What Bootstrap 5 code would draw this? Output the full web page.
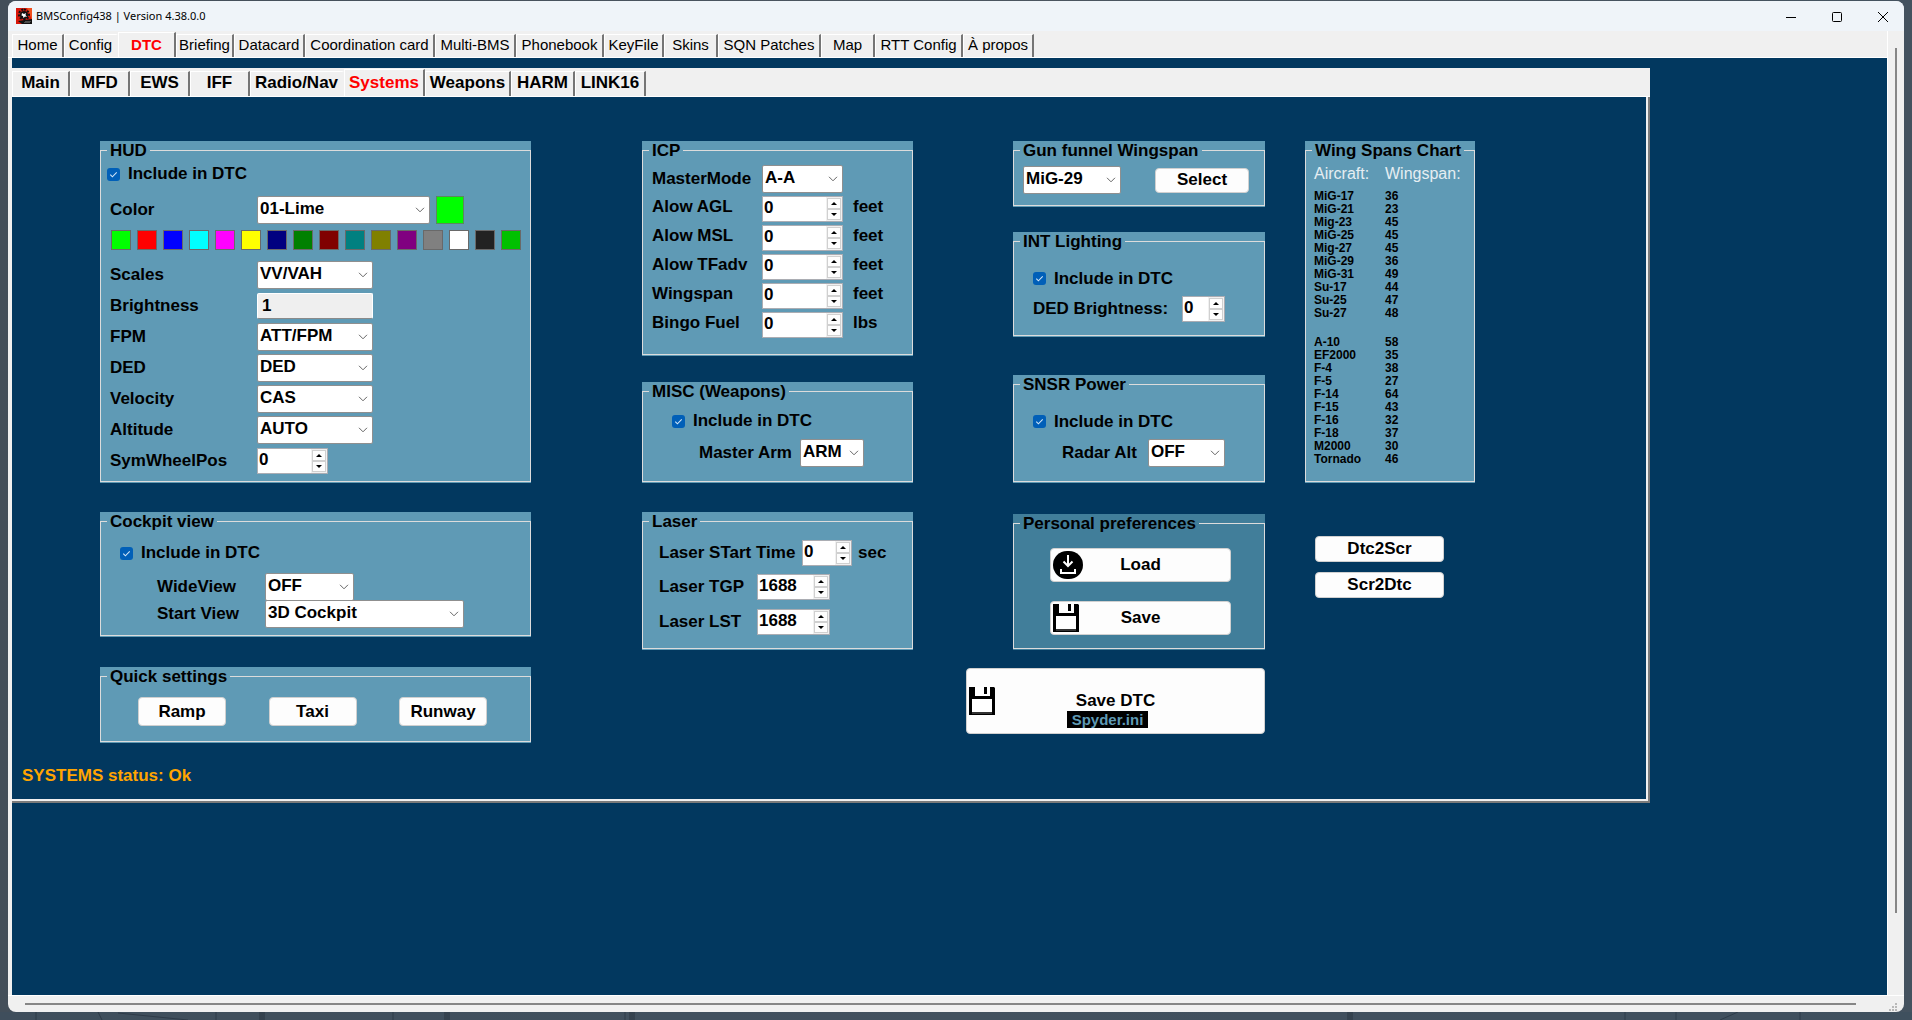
<!DOCTYPE html>
<html lang="en">
<head>
<meta charset="utf-8">
<meta name="viewport" content="width=device-width, initial-scale=1">
<title>BMSConfig438 | Version 4.38.0.0</title>
<link href="https://cdn.jsdelivr.net/npm/bootstrap@5.3.0/dist/css/bootstrap.min.css" rel="stylesheet">
<style>
:root{--navy:#02385f;--steel:#5f9ab5;--steel-dark:#417e9a;--face:#f0f0f0}
body{font-family:"Liberation Sans",Arial,sans-serif;font-size:17px;line-height:20px;font-weight:700;color:#000;background:linear-gradient(90deg,#434e59,#4b5560 50%,#44525f)}
.desk{min-height:100vh;padding:1px 8px 8px}
.desk-art{left:0;bottom:0;width:100%;height:8px;opacity:.6}
.win{background:var(--face);border-radius:8px;overflow:hidden}
.titlebar{height:30px;background:#eff4f9;font:400 11px/16px "Noto Sans","Open Sans",sans-serif;padding:0 8px}
.caption-btn{border:0;background:none;width:46px;height:30px;padding:0}
.caption-btn:last-child{width:26px;margin-left:10px}
.rail-v{width:17px;border-left:1px solid #fff;padding:17px 7px 82px 7px}
.rail-h{height:17px;border-top:1px solid #fff;padding:7px 3px 7px 17px}
.thumb{background:#868686}
/* classic tab strips */
.strip{background:var(--face);border-bottom:1px solid #fff;padding-top:3px}
.strip a{display:block;flex:none;text-align:center;text-decoration:none;color:#000;white-space:nowrap;border:1px solid #fff;border-width:1px 2px 0 1px;border-right-color:#757575}
.strip a.active{color:#f00;font-weight:700;margin-top:-2px;padding-top:2px}
.strip a.before-active{border-right-color:var(--face)}
.strip-main{height:27px;font-size:15px;line-height:20px;font-weight:400}
.strip-sub{height:29px}
.strip-sub a{line-height:22px}
.t52{width:52px}.t54{width:54px}.t58{width:58px}.t60{width:60px}.t64{width:64px}.t71{width:71px}.t81{width:81px}.t88{width:88px}.t86{width:86px}.t94{width:94px}.t103{width:103px}.t130{width:130px}
.page{background:var(--navy);margin-left:4px;padding-top:10px}
.subtabs{width:87.36%}
.sheet{background:var(--navy);border:solid #7b7b7b;border-width:0 2px 2px 0}
.sheet-in{border:solid var(--face);border-width:0 2px 2px 0;padding:44px 171px 13px 88px}
.c1{flex:431 1 0}.c2{flex:271 1 0;margin-left:111px}.c3{flex:252 1 0;margin-left:100px}.c4{flex:170 1 0;margin-left:40px}
/* group boxes */
.panel{background:var(--steel);padding-bottom:1px}
.panel.deep{background:var(--steel-dark)}
.panel fieldset{border:1px solid #dcdcdc;height:100%}
.panel legend{float:none;width:auto;font-size:17px;line-height:19px;margin:0 0 0 6px;padding:0 3px}
.h342{height:342px}.h125{height:125px}.h76{height:76px}.h215{height:215px}.h101{height:101px}.h138{height:138px}.h66{height:66px}.h105{height:105px}.h108{height:108px}.h136{height:136px}
.mt29{margin-top:29px}.mt30{margin-top:30px}.mt26{margin-top:26px}.mt25{margin-top:25px}.mt38{margin-top:38px}.mt31{margin-top:31px}.mt6{margin-top:6px}.mt14{margin-top:14px}
.line{display:flex;align-items:center}
.line label,.unit{white-space:nowrap}
.r28{height:28px}.r27{height:27px}.r29{height:29px}.r31{height:31px}.r34{height:34px}.r35{height:35px}
.icp .r29 label,.icp .unit{padding-bottom:4px}
.form-check-input.tick{width:13px;height:13px;margin:0 8px 0 0;border:0;border-radius:3px;background-size:11px;flex:none}
.form-check-input.tick:checked{background-color:#005fb8;background-image:url("data:image/svg+xml,%3Csvg xmlns='http://www.w3.org/2000/svg' viewBox='0 0 12 12'%3E%3Cpath d='M2.5 6.2l2.3 2.3 4.7-4.8' fill='none' stroke='%23cfe4f7' stroke-width='1.2'/%3E%3C/svg%3E")}
.form-select.drop{height:28px;border:1px solid #8f8f8f;border-radius:2px;padding:0 18px 2px 2px;color:#000;font-weight:700;font-size:17px;line-height:20px;background:#fff url("data:image/svg+xml,%3Csvg xmlns='http://www.w3.org/2000/svg' viewBox='0 0 10 6'%3E%3Cpath d='M1 .8l4 4 4-4' fill='none' stroke='%23666'/%3E%3C/svg%3E") no-repeat right 4px center/10px 6px;flex:none}
.w173{width:173px}.w116{width:116px}.w89{width:89px}.w199{width:199px}.w81{width:81px}.w64{width:64px}.w98{width:98px}.w77{width:77px}
.form-control.flat{width:116px;height:26px;border:1px solid #fff;border-bottom-color:#8a8a8a;border-radius:2px;background:#efefef;padding:0 4px;font-weight:700;font-size:17px;color:#000}
.spin{display:flex;height:26px;border:1px solid #abadb3;background:#fff;flex:none}
.spin input{min-width:0;flex:1;border:0;padding:0 0 2px 1px;font-weight:700;font-size:17px;line-height:20px;background:none;color:#000}
.spin .arrows{display:flex;flex-direction:column;width:16px;padding:1px;background:var(--face)}
.spin button{flex:1;padding:0;border:1px solid #d0d0d0;background:#fdfdfd;display:flex;align-items:center;justify-content:center}
.spin button::before{content:"";border:3px solid transparent;border-bottom-color:#000;border-top:0}
.spin button:last-child::before{border-top:3px solid #000;border-bottom:0}
.s71{width:71px}.s81{width:81px}.s50{width:50px}.s73{width:73px}.s43{width:43px}
.swatches{gap:6px;padding:6px 0 9px 10px}
.sw{width:20px;height:20px;padding:0;border:1px solid #696969}
.sw-now{width:28px;height:28px;margin-left:6px;border:1px solid #5b8a5b;background:#0f0}
.btn.key{background:#fdfdfd;border:1px solid #d0d0d0;border-radius:4px;color:#000;font-weight:700;font-size:17px;line-height:20px;padding:0;position:relative}
.key .pic{position:absolute;left:2px;top:50%;transform:translateY(-50%)}
.w-hud{width:147px}.w-cpt{width:108px}.w-icp{width:110px}.w-las{width:98px}.w-arm{width:101px}.w-time{width:143px}.w-ded{width:149px}.w-radar{width:86px}
.i7{padding-left:6px}.i10{padding-left:9px}.i17{padding-left:16px}.i20{padding-left:19px}.i30{padding-left:29px}.i49{padding-left:48px}.i57{padding-left:56px}
.quick{padding:11px 43px 0 37px}.quick .key{width:88px;height:29px}
.unit{margin-left:10px}.unit-s{margin-left:6px}
.gun{padding-right:15px}.gun .key{width:94px;height:25px}
.prefs{gap:19px;padding:15px 33px 0 36px}.prefs .key{height:34px}
.convert{gap:10px;margin:53px 31px 0 10px}.convert .key{height:26px}
.spans{font-size:12px;line-height:13px;margin-left:8px}
.spans th{font-size:16px;line-height:20px;font-weight:400;color:#e6eef2;padding:4px 0 6px}
.spans td{padding:0}
.spans td:first-child,.spans th:first-child{width:71px}
.spans .gap td{padding-top:16px}
.btn.savebtn{width:calc(100% + 47px);height:66px;margin:18px 0 0 -47px;padding-bottom:5px}
.savebtn .file{font-size:15px;line-height:17px;background:#000;color:var(--steel);padding:0 5px;margin-right:16px}
.status{color:orange;margin:23px 0 0 -78px;white-space:nowrap}
</style>
<script src="https://cdn.jsdelivr.net/npm/bootstrap@5.3.0/dist/js/bootstrap.bundle.min.js"></script>
</head>
<body>
<svg width="0" height="0" class="position-absolute" aria-hidden="true">
  <symbol id="floppy" viewBox="0 0 26 28"><path fill="#000" d="M0 0h25l1 1v27H0z"/><path fill="#fff" d="M6 0h15v9H6zM3 12h20v13H3z"/><path d="M15 0h3v7h-3z"/><path fill="#333" d="M3 25h20v2H3z"/></symbol>
</svg>
<div class="desk d-flex flex-column position-relative">
  <svg class="desk-art position-absolute" preserveAspectRatio="none" viewBox="0 0 1912 8" aria-hidden="true"><path fill="#3d4f5e" d="M0 0h1912v8H0z"/><path stroke="#1f2e3c" fill="none" d="M36 0v8M98 0l4 8M118 1l70 7M216 0v8M393 0v8M625 0v8M1625 0v8M1676 0v8M1738 0l-18 8M1800 0v8"/><path stroke="#2a3946" stroke-width="6" fill="none" d="M262 0v8M447 0v8M632 0v8M1350 0v8"/></svg>
  <div class="win d-flex flex-column flex-grow-1 position-relative">
    <header class="titlebar d-flex align-items-center">
      <svg width="16" height="16" viewBox="0 0 16 16" class="me-1" aria-hidden="true"><path fill="#d8160a" d="M0 0h16v16H0z"/><path fill="#f0501e" d="M11 0h5v12z"/><circle cx="8" cy="7" r="4" fill="#111"/><path stroke="#111" stroke-width="2" stroke-dasharray="2 1.5" fill="none" d="M8 1.500a5 5 0 1 1-.01 0"/><path fill="#fff" d="M6 5l2 1 2-1-.5 2L11 9l-2-.5L7.500 10 7 8 5.500 7.500z"/><path fill="#111" d="M2 13l14-2v5H6z"/><path stroke="#fff" d="M9 14.500l1-1m1 1l1-1m1 1l1-1"/></svg>
      <span>BMSConfig438 | Version 4.38.0.0</span>
      <div class="ms-auto d-flex">
        <button class="caption-btn" aria-label="Minimize"><svg width="10" height="10"><path d="M0 5.500h10" stroke="#000"/></svg></button>
        <button class="caption-btn" aria-label="Maximize"><svg width="10" height="10"><rect x=".5" y=".5" width="9" height="9" rx="1" fill="none" stroke="#000"/></svg></button>
        <button class="caption-btn" aria-label="Close"><svg width="10" height="10"><path d="M0 0l10 10M10 0L0 10" stroke="#000"/></svg></button>
      </div>
    </header>
    <div class="d-flex flex-grow-1">
      <main class="flex-grow-1 d-flex flex-column">
        <nav class="strip strip-main d-flex ps-1" aria-label="Sections">
          <a href="#" class="t52">Home</a><a href="#" class="t54 before-active">Config</a><a href="#" class="t58 active">DTC</a><a href="#" class="t58">Briefing</a><a href="#" class="t71">Datacard</a><a href="#" class="t130">Coordination card</a><a href="#" class="t81">Multi-BMS</a><a href="#" class="t88">Phonebook</a><a href="#" class="t60">KeyFile</a><a href="#" class="t54">Skins</a><a href="#" class="t103">SQN Patches</a><a href="#" class="t54">Map</a><a href="#" class="t88">RTT Config</a><a href="#" class="t71">À propos</a>
        </nav>
        <div class="page flex-grow-1">
          <div class="subtabs">
            <nav class="strip strip-sub d-flex" aria-label="DTC pages">
              <a href="#" class="t58">Main</a><a href="#" class="t60">MFD</a><a href="#" class="t60">EWS</a><a href="#" class="t60">IFF</a><a href="#" class="t94 before-active">Radio/Nav</a><a href="#" class="t81 active">Systems</a><a href="#" class="t86">Weapons</a><a href="#" class="t64">HARM</a><a href="#" class="t71">LINK16</a>
            </nav>
            <div class="sheet"><div class="sheet-in">
              <div class="d-flex">
                <div class="c1">
                  <div class="panel h342"><fieldset><legend>HUD</legend>
                    <div class="line r28 i7"><input type="checkbox" class="form-check-input tick" id="hudInc" checked><label for="hudInc">Include in DTC</label></div>
                    <div class="line r28 i10 mt-2"><label class="w-hud" for="hudColor">Color</label><select class="form-select drop w173" id="hudColor"><option>01-Lime</option></select><span class="sw-now"></span></div>
                    <div class="d-flex swatches" id="swatches"></div>
                    <div class="line r31 i10"><label class="w-hud" for="scales">Scales</label><select class="form-select drop w116" id="scales"><option>VV/VAH</option></select></div>
                    <div class="line r31 i10"><label class="w-hud" for="bright">Brightness</label><input class="form-control flat" id="bright" value="1" readonly></div>
                    <div class="line r31 i10"><label class="w-hud" for="fpm">FPM</label><select class="form-select drop w116" id="fpm"><option>ATT/FPM</option></select></div>
                    <div class="line r31 i10"><label class="w-hud" for="ded">DED</label><select class="form-select drop w116" id="ded"><option>DED</option></select></div>
                    <div class="line r31 i10"><label class="w-hud" for="vel">Velocity</label><select class="form-select drop w116" id="vel"><option>CAS</option></select></div>
                    <div class="line r31 i10"><label class="w-hud" for="alt">Altitude</label><select class="form-select drop w116" id="alt"><option>AUTO</option></select></div>
                    <div class="line r31 i10"><label class="w-hud" for="sym">SymWheelPos</label><div class="spin s71"><input id="sym" value="0"><span class="arrows"><button aria-label="Up"></button><button aria-label="Down"></button></span></div></div>
                  </fieldset></div>
                  <div class="panel h125 mt29"><fieldset><legend>Cockpit view</legend>
                    <div class="line r28 i20 mt-2"><input type="checkbox" class="form-check-input tick" id="cpInc" checked><label for="cpInc">Include in DTC</label></div>
                    <div class="line r27 i57 mt6"><label class="w-cpt" for="wide">WideView</label><select class="form-select drop w89" id="wide"><option>OFF</option></select></div>
                    <div class="line r27 i57"><label class="w-cpt" for="start">Start View</label><select class="form-select drop w199" id="start"><option>3D Cockpit</option></select></div>
                  </fieldset></div>
                  <div class="panel h76 mt30"><fieldset><legend>Quick settings</legend>
                    <div class="d-flex justify-content-between quick"><button class="btn key">Ramp</button><button class="btn key">Taxi</button><button class="btn key">Runway</button></div>
                  </fieldset></div>
                  <div class="status">SYSTEMS status: Ok</div>
                </div>
                <div class="c2">
                  <div class="panel h215 icp"><fieldset><legend>ICP</legend>
                    <div class="line r34 i10 pt-1"><label class="w-icp" for="mm">MasterMode</label><select class="form-select drop w81" id="mm"><option>A-A</option></select></div>
                    <div class="line r29 i10"><label class="w-icp" for="agl">Alow AGL</label><div class="spin s81"><input id="agl" value="0"><span class="arrows"><button aria-label="Up"></button><button aria-label="Down"></button></span></div><span class="unit">feet</span></div>
                    <div class="line r29 i10"><label class="w-icp" for="msl">Alow MSL</label><div class="spin s81"><input id="msl" value="0"><span class="arrows"><button aria-label="Up"></button><button aria-label="Down"></button></span></div><span class="unit">feet</span></div>
                    <div class="line r29 i10"><label class="w-icp" for="tf">Alow TFadv</label><div class="spin s81"><input id="tf" value="0"><span class="arrows"><button aria-label="Up"></button><button aria-label="Down"></button></span></div><span class="unit">feet</span></div>
                    <div class="line r29 i10"><label class="w-icp" for="ws">Wingspan</label><div class="spin s81"><input id="ws" value="0"><span class="arrows"><button aria-label="Up"></button><button aria-label="Down"></button></span></div><span class="unit">feet</span></div>
                    <div class="line r29 i10"><label class="w-icp" for="bingo">Bingo Fuel</label><div class="spin s81"><input id="bingo" value="0"><span class="arrows"><button aria-label="Up"></button><button aria-label="Down"></button></span></div><span class="unit">lbs</span></div>
                  </fieldset></div>
                  <div class="panel h101 mt26"><fieldset><legend>MISC (Weapons)</legend>
                    <div class="line r28 i30 mt6"><input type="checkbox" class="form-check-input tick" id="miscInc" checked><label for="miscInc">Include in DTC</label></div>
                    <div class="line r28 i57 mt-1"><label class="w-arm" for="arm">Master Arm</label><select class="form-select drop w64" id="arm"><option>ARM</option></select></div>
                  </fieldset></div>
                  <div class="panel h138 mt29"><fieldset><legend>Laser</legend>
                    <div class="line r35 i17 mt-1"><label class="w-time" for="lst0">Laser STart Time</label><div class="spin s50"><input id="lst0" value="0"><span class="arrows"><button aria-label="Up"></button><button aria-label="Down"></button></span></div><span class="unit-s">sec</span></div>
                    <div class="line r34 i17"><label class="w-las" for="tgp">Laser TGP</label><div class="spin s73"><input id="tgp" value="1688"><span class="arrows"><button aria-label="Up"></button><button aria-label="Down"></button></span></div></div>
                    <div class="line r35 i17"><label class="w-las" for="lst">Laser LST</label><div class="spin s73"><input id="lst" value="1688"><span class="arrows"><button aria-label="Up"></button><button aria-label="Down"></button></span></div></div>
                  </fieldset></div>
                </div>
                <div class="c3">
                  <div class="panel h66"><fieldset><legend>Gun funnel Wingspan</legend>
                    <div class="line r28 i10 mt6 justify-content-between gun"><select class="form-select drop w98" aria-label="Aircraft"><option>MiG-29</option></select><button class="btn key">Select</button></div>
                  </fieldset></div>
                  <div class="panel h105 mt25"><fieldset><legend>INT Lighting</legend>
                    <div class="line r27 i20 mt14"><input type="checkbox" class="form-check-input tick" id="intInc" checked><label for="intInc">Include in DTC</label></div>
                    <div class="line r34 i20"><label class="w-ded" for="dedb">DED Brightness:</label><div class="spin s43"><input id="dedb" value="0"><span class="arrows"><button aria-label="Up"></button><button aria-label="Down"></button></span></div></div>
                  </fieldset></div>
                  <div class="panel h108 mt38"><fieldset><legend>SNSR Power</legend>
                    <div class="line r27 i20 mt14"><input type="checkbox" class="form-check-input tick" id="snInc" checked><label for="snInc">Include in DTC</label></div>
                    <div class="line r28 i49 mt-1"><label class="w-radar" for="radar">Radar Alt</label><select class="form-select drop w77" id="radar"><option>OFF</option></select></div>
                  </fieldset></div>
                  <div class="panel deep h136 mt31"><fieldset><legend>Personal preferences</legend>
                    <div class="d-flex flex-column prefs">
                      <button class="btn key"><svg class="pic" width="30" height="28" viewBox="0 0 30 28"><rect width="30" height="28" rx="14"/><path d="M15 4v11M10.500 10.500L15 15l4.500-4.500M8 18v4h14v-4" fill="none" stroke="#fff" stroke-width="2"/></svg>Load</button>
                      <button class="btn key"><svg class="pic" width="26" height="28"><use href="#floppy"/></svg>Save</button>
                    </div>
                  </fieldset></div>
                  <button class="btn key savebtn d-flex flex-column align-items-center justify-content-end"><svg class="pic" width="26" height="28"><use href="#floppy"/></svg><span>Save DTC</span><span class="file">Spyder.ini</span></button>
                </div>
                <div class="c4">
                  <div class="panel h342"><fieldset><legend>Wing Spans Chart</legend>
                    <table class="spans"><thead><tr><th>Aircraft:</th><th>Wingspan:</th></tr></thead><tbody>
                      <tr><td>MiG-17</td><td>36</td></tr><tr><td>MiG-21</td><td>23</td></tr><tr><td>Mig-23</td><td>45</td></tr><tr><td>MiG-25</td><td>45</td></tr><tr><td>Mig-27</td><td>45</td></tr><tr><td>MiG-29</td><td>36</td></tr><tr><td>MiG-31</td><td>49</td></tr><tr><td>Su-17</td><td>44</td></tr><tr><td>Su-25</td><td>47</td></tr><tr><td>Su-27</td><td>48</td></tr>
                      <tr class="gap"><td>A-10</td><td>58</td></tr><tr><td>EF2000</td><td>35</td></tr><tr><td>F-4</td><td>38</td></tr><tr><td>F-5</td><td>27</td></tr><tr><td>F-14</td><td>64</td></tr><tr><td>F-15</td><td>43</td></tr><tr><td>F-16</td><td>32</td></tr><tr><td>F-18</td><td>37</td></tr><tr><td>M2000</td><td>30</td></tr><tr><td>Tornado</td><td>46</td></tr>
                    </tbody></table>
                  </fieldset></div>
                  <div class="d-flex flex-column convert"><button class="btn key">Dtc2Scr</button><button class="btn key">Scr2Dtc</button></div>
                </div>
              </div>
            </div></div>
          </div>
        </div>
      </main>
      <div class="rail-v d-flex"><div class="thumb flex-grow-1"></div></div>
    </div>
    <div class="rail-h d-flex"><div class="thumb flex-grow-1"></div><svg width="45" height="10" viewBox="3 0 45 10" aria-hidden="true"><path fill="#b8b8b8" d="M42 0h2v2h-2zM39 3h2v2h-2zM42 3h2v2h-2zM36 6h2v2h-2zM39 6h2v2h-2zM42 6h2v2h-2z"/></svg></div>
  </div>
</div>
<script>
const colours=[['Lime','#00ff00'],['Red','#ff0000'],['Blue','#0000ff'],['Cyan','#00ffff'],['Magenta','#ff00ff'],['Yellow','#ffff00'],['Navy','#000080'],['Green','#008000'],['Maroon','#800000'],['Teal','#008080'],['Olive','#808000'],['Purple','#800080'],['Gray','#808080'],['White','#ffffff'],['Black','#222222'],['Dark lime','#00c000']];
document.getElementById('swatches').innerHTML=colours.map(([n,c])=>`<button class="sw" aria-label="${n}" style="background:${c}"></button>`).join('');
</script>
</body>
</html>
